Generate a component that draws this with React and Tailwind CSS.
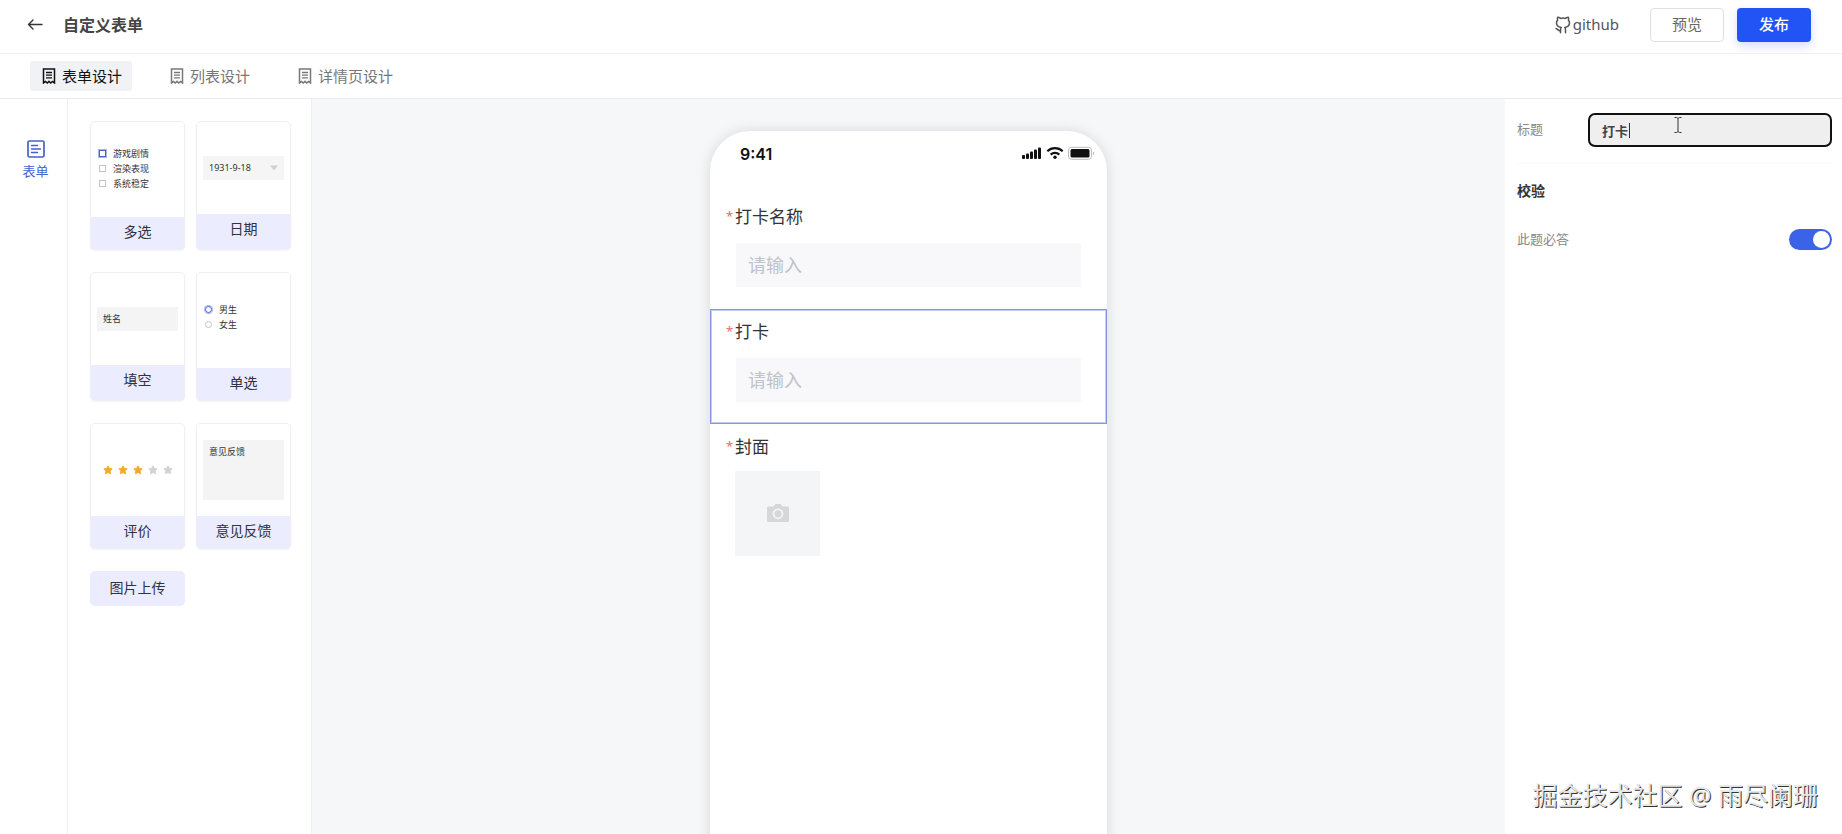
import React from 'react';
import { Star } from 'lucide-react';

const tabs = [
  { name: '表单设计', active: true },
  { name: '列表设计', active: false },
  { name: '详情页设计', active: false },
];

const BackIcon = () => (
  <svg className="w-4 h-3.5" viewBox="0 0 16 14" fill="none" stroke="#333" strokeWidth="1.4" strokeLinecap="round" strokeLinejoin="round">
    <path d="M15 6.500H1.500M6 2 1.500 6.500 6 11" />
  </svg>
);

const ReceiptIcon = () => (
  <svg className="w-3.5 h-4" viewBox="0 0 14 16" fill="none" stroke="currentColor" strokeWidth="1.5">
    <path d="M1.5 15V1h11v14l-2-1.6-1.8 1.6L7 13.4 5.3 15l-1.8-1.6z" />
    <path d="M4 4.5h6M4 7.2h6M4 9.9h6" strokeWidth="1.3" />
  </svg>
);

const FormIcon = () => (
  <svg className="w-[18px] h-[18px]" viewBox="0 0 18 18" fill="none" stroke="currentColor" strokeWidth="1.7" strokeLinecap="round">
    <rect x="1" y="1" width="16" height="16" rx="1.5" />
    <path d="M4.5 5.5h6M4.5 9h9M4.5 12.5h6" strokeWidth="1.4" />
  </svg>
);

const GithubIcon = () => (
  <svg className="w-4 h-[18px]" viewBox="0 0 16 18" fill="none" stroke="currentColor" strokeWidth="1.5" strokeLinejoin="round" strokeLinecap="round">
    <path d="M5.5 16.8v-3.3c0-1 .3-1.6.8-2C3.800 11.200 1.500 10 1.500 6.800c0-1.200.4-2.100 1.100-2.900C2.300 3 2.300 2 2.700 1.200c1.200 0 2.100.6 2.900 1.200a10 10 0 0 1 4.800 0c.8-.6 1.700-1.200 2.900-1.200.4.8.4 1.800.1 2.700.7.8 1.100 1.700 1.100 2.900 0 3.200-2.300 4.400-4.800 4.700.5.4.8 1 .8 2v3.300" />
    <path d="M5.500 14.600c-2.500.5-2.700-1.600-4.500-2" />
  </svg>
);

// --- STATUS BAR ICONS ---
const StatusIcons = () => (
  <svg className="w-[73px] h-4" viewBox="0 0 73 16">
    <g fill="#111">
      <rect x="0" y="10" width="3" height="4" rx="1" />
      <rect x="4" y="8.500" width="3" height="5.500" rx="1" />
      <rect x="8" y="6.500" width="3" height="7.500" rx="1" />
      <rect x="12" y="4.500" width="3" height="9.500" rx="1" />
      <rect x="16" y="2.500" width="3" height="11.500" rx="1" />
      <circle cx="33" cy="12.300" r="1.700" />
      <rect x="48.500" y="4" width="19" height="8.500" rx="1.500" />
    </g>
    <g fill="none" stroke="#111" strokeWidth="2.200">
      <path d="M25.300 6.300a11 11 0 0 1 15.400 0" />
      <path d="M28.700 9.600a6.200 6.200 0 0 1 8.600 0" />
    </g>
    <rect x="46.500" y="2.300" width="23" height="12" rx="3" fill="none" stroke="#bbb" />
    <path d="M71 6.500c1.600.4 1.600 3.200 0 3.600z" fill="#bbb" />
  </svg>
);

const CameraIcon = () => (
  <svg className="w-[22px] h-[18px]" viewBox="0 0 22 18">
    <path fill="#d5d7d9" d="M1.500 2.500h5L8.500 0h5l2 2.500h5q1.500 0 1.500 1.500v12.500q0 1.500-1.500 1.500h-19Q0 18 0 16.500V4q0-1.500 1.500-1.500z" />
    <circle cx="11" cy="9.800" r="4.500" fill="none" stroke="#f3f5f6" strokeWidth="1.800" />
  </svg>
);

// --- PALETTE CARD ---
const PaletteCard = ({ name, children, height }) => (
  <button type="button" className="flex flex-col rounded-[5px] bg-[#ebecfd] overflow-hidden border border-[#eeeff8] shadow-xs">
    <div className={`w-full bg-white px-1.5 flex flex-col justify-center ${height}`}>{children}</div>
    <span className="w-full h-8 leading-[30px] text-[14px] text-[#2e3243] text-center">{name}</span>
  </button>
);

const OptionRow = ({ text, checked, round }) => (
  <div className="flex items-center gap-[7px] h-[15px] pl-0.5 text-[9px] leading-none text-[#333]">
    <span
      className={`w-[7px] h-[7px] border ${round ? 'rounded-full' : ''} ${checked ? 'border-[#4a5fd0] ring-1 ring-[#a9b3ec]' : 'border-[#c4c4c4]'}`}
    ></span>
    <span>{text}</span>
  </div>
);

// --- FORM FIELD ON THE PHONE ---
const PhoneField = ({ id, label, selected, children }) => (
  <div className={`px-[15px] pt-2.5 pb-[21px] border ${selected ? 'border-[#8796e0] outline-[1px] -outline-offset-2 outline-[#c3cbf3]' : 'border-transparent'}`}>
    <label htmlFor={id} className="flex items-center gap-[3px] h-6 text-[17px] text-[#333]">
      <span className="w-[6px] text-[13px] text-[#ee6a5f]">*</span>
      {label}
    </label>
    {children}
  </div>
);

const PhoneInput = ({ id }) => (
  <div className="pt-3.5 pl-2.5 pr-2.5">
    <input
      id={id}
      placeholder="请输入"
      className="block w-full h-11 px-3 bg-[#f8f8fb] text-[18px] placeholder:text-[#bfc2c8] outline-none"
    />
  </div>
);

export default function App() {
  return (
    <div className="h-screen flex flex-col overflow-hidden bg-white text-[#444] font-['Noto_Sans','Noto_Sans_CJK_SC',sans-serif]">
      {/* --- HEADER --- */}
      <header className="h-[54px] shrink-0 flex items-center pl-[27px] pr-[31px] pb-1 border-b border-[#f1f1f3]">
        <button type="button" aria-label="返回">
          <BackIcon />
        </button>
        <h1 className="ml-5 text-[16px] font-bold text-[#444]">自定义表单</h1>
        <div className="ml-auto flex items-center">
          <a href="#github" className="flex items-center gap-0.5 text-[15px] text-[#555]">
            <GithubIcon />
            github
          </a>
          <button type="button" className="ml-[31px] w-[74px] h-[34px] rounded border border-[#e0e0e4] text-[15px] text-[#666]">
            预览
          </button>
          <button type="button" className="ml-[13px] w-[74px] h-[34px] rounded bg-[#2153f5] text-[15px] font-medium text-white shadow-[0_4px_10px_rgba(33,83,245,0.2)]">
            发布
          </button>
        </div>
      </header>

      {/* --- TABS --- */}
      <nav className="h-[45px] shrink-0 flex items-center gap-[26px] pl-[30px] border-b border-[#e9ebef]">
        {tabs.map((tab) => (
          <button
            type="button"
            key={tab.name}
            className={`flex items-center gap-1.5 h-[30px] pl-3 pr-2.5 rounded-[3px] text-[15px] ${
              tab.active ? 'bg-[#f1f2f5] text-[#111]' : 'text-[#777]'
            }`}
          >
            <ReceiptIcon />
            {tab.name}
          </button>
        ))}
      </nav>

      <div className="flex grow min-h-0">
        {/* --- SIDEBAR --- */}
        <aside className="w-[68px] shrink-0 pt-[41px] border-r border-[#eceef2]">
          <button type="button" className="w-full pl-1 flex flex-col items-center gap-1 text-[13px] text-[#4560cf]">
            <FormIcon />
            表单
          </button>
        </aside>

        {/* --- PALETTE --- */}
        <section className="w-[244px] shrink-0 pl-[22px] pr-5 pt-[22px] border-r border-[#eceef2]">
          <div className="grid grid-cols-2 gap-x-[11px] gap-y-[22px]">
            <PaletteCard name="多选" height="h-[95px]">
              <div className="pb-0.5">
                <OptionRow text="游戏剧情" checked />
                <OptionRow text="渲染表现" />
                <OptionRow text="系统稳定" />
              </div>
            </PaletteCard>
            <PaletteCard name="日期" height="h-[92px]">
              <div className="h-6 px-1.5 bg-[#f5f5f5] flex items-center justify-between text-[9px] text-[#333]">
                1931-9-18
                <svg className="w-2 h-1.5" viewBox="0 0 8 6" fill="#d0d0d0">
                  <path d="M0 .5h8L4 5.500z" />
                </svg>
              </div>
            </PaletteCard>
            <PaletteCard name="填空" height="h-[92px]">
              <div className="h-6 px-1.5 bg-[#f4f4f4] flex items-center text-[9px] text-[#333]">姓名</div>
            </PaletteCard>
            <PaletteCard name="单选" height="h-[95px]">
              <div className="pb-2">
                <OptionRow text="男生" checked round />
                <OptionRow text="女生" round />
              </div>
            </PaletteCard>
            <PaletteCard name="评价" height="h-[92px]">
              <div className="flex justify-center gap-[5px]">
                {[1, 2, 3, 4, 5].map((n) => (
                  <Star key={n} className={`w-2.5 h-2.5 ${n <= 3 ? 'text-[#f5a92b]' : 'text-[#d2d2d2]'}`} fill="currentColor" />
                ))}
              </div>
            </PaletteCard>
            <PaletteCard name="意见反馈" height="h-[92px]">
              <div className="h-[60px] px-1.5 pt-1.5 bg-[#f4f4f4] text-left text-[9px] leading-[11px] text-[#333]">意见反馈</div>
            </PaletteCard>
            <button type="button" className="h-[35px] pb-0.5 rounded-[5px] bg-[#ebecfd] text-[14px] text-[#2e3243]">
              图片上传
            </button>
          </div>
        </section>

        {/* --- CANVAS --- */}
        <main className="grow min-w-0 flex justify-center items-start pt-8 bg-[#f6f7f9] overflow-hidden">
          <div className="w-[397px] min-h-[812px] bg-white rounded-[40px] shadow-[0_0_14px_rgba(0,0,0,0.13)]">
            <div className="h-[63px] pt-3 pl-[30px] pr-3 flex items-start justify-between">
              <span className="font-['Inter',sans-serif] text-[16px] leading-[22px] font-semibold text-[#111]">9:41</span>
              <div className="pt-0.5"><StatusIcons /></div>
            </div>
            <PhoneField id="f-name" label="打卡名称">
              <PhoneInput id="f-name" />
            </PhoneField>
            <PhoneField id="f-punch" label="打卡" selected>
              <PhoneInput id="f-punch" />
            </PhoneField>
            <PhoneField id="f-cover" label="封面">
              <div className="pt-3 pl-[9px]">
                <button id="f-cover" type="button" aria-label="封面" className="w-[85px] h-[85px] pb-0.5 flex items-center justify-center bg-[#f3f5f6]">
                  <CameraIcon />
                </button>
              </div>
            </PhoneField>
          </div>
        </main>

        {/* --- PROPERTIES --- */}
        <aside className="relative w-[337px] shrink-0 pl-3 pr-2.5 pt-3.5 text-[13px] text-[#888]">
          <div className="flex items-center justify-between pb-4 border-b border-[#f8f8f9]">
            <label htmlFor="title">标题</label>
            <div className="relative w-[244px]">
              <input
                id="title"
                defaultValue="打卡"
                className="block w-full h-[34px] px-3 rounded-[7px] border-2 border-[#111] bg-[#efefef] text-[13px] font-bold text-[#444] outline-none"
              />
              <span className="absolute left-[41px] top-[10px] w-px h-[15px] bg-[#333]"></span>
              <svg className="absolute left-[86px] top-1 w-2 h-4" viewBox="0 0 8 16" fill="none" stroke="#333">
                <path d="M.5.500h2L4 1.500 5.500.500h2M4 1.500v13M.5 15.500h2L4 14.500l1.500 1h2" />
              </svg>
            </div>
          </div>
          <h2 className="mt-[17px] h-5 leading-5 text-[14px] font-bold text-[#333]">校验</h2>
          <div className="mt-7 flex items-center justify-between h-[21px]">
            <label htmlFor="required">此题必答</label>
            <input
              id="required"
              type="checkbox"
              role="switch"
              defaultChecked
              className="appearance-none w-[43px] h-[21px] rounded-full bg-[#ccc] checked:bg-[#3b63e8] before:block before:w-[17px] before:h-[17px] before:mt-0.5 before:ml-0.5 checked:before:ml-6 before:rounded-full before:bg-white"
            />
          </div>
          <div className="absolute right-6 bottom-[21px] whitespace-nowrap text-[25px] leading-9 text-[#e6e6e6] [text-shadow:1px_1px_0_#333]">
            掘金技术社区 @ 雨尽阑珊
          </div>
        </aside>
      </div>
    </div>
  );
}
